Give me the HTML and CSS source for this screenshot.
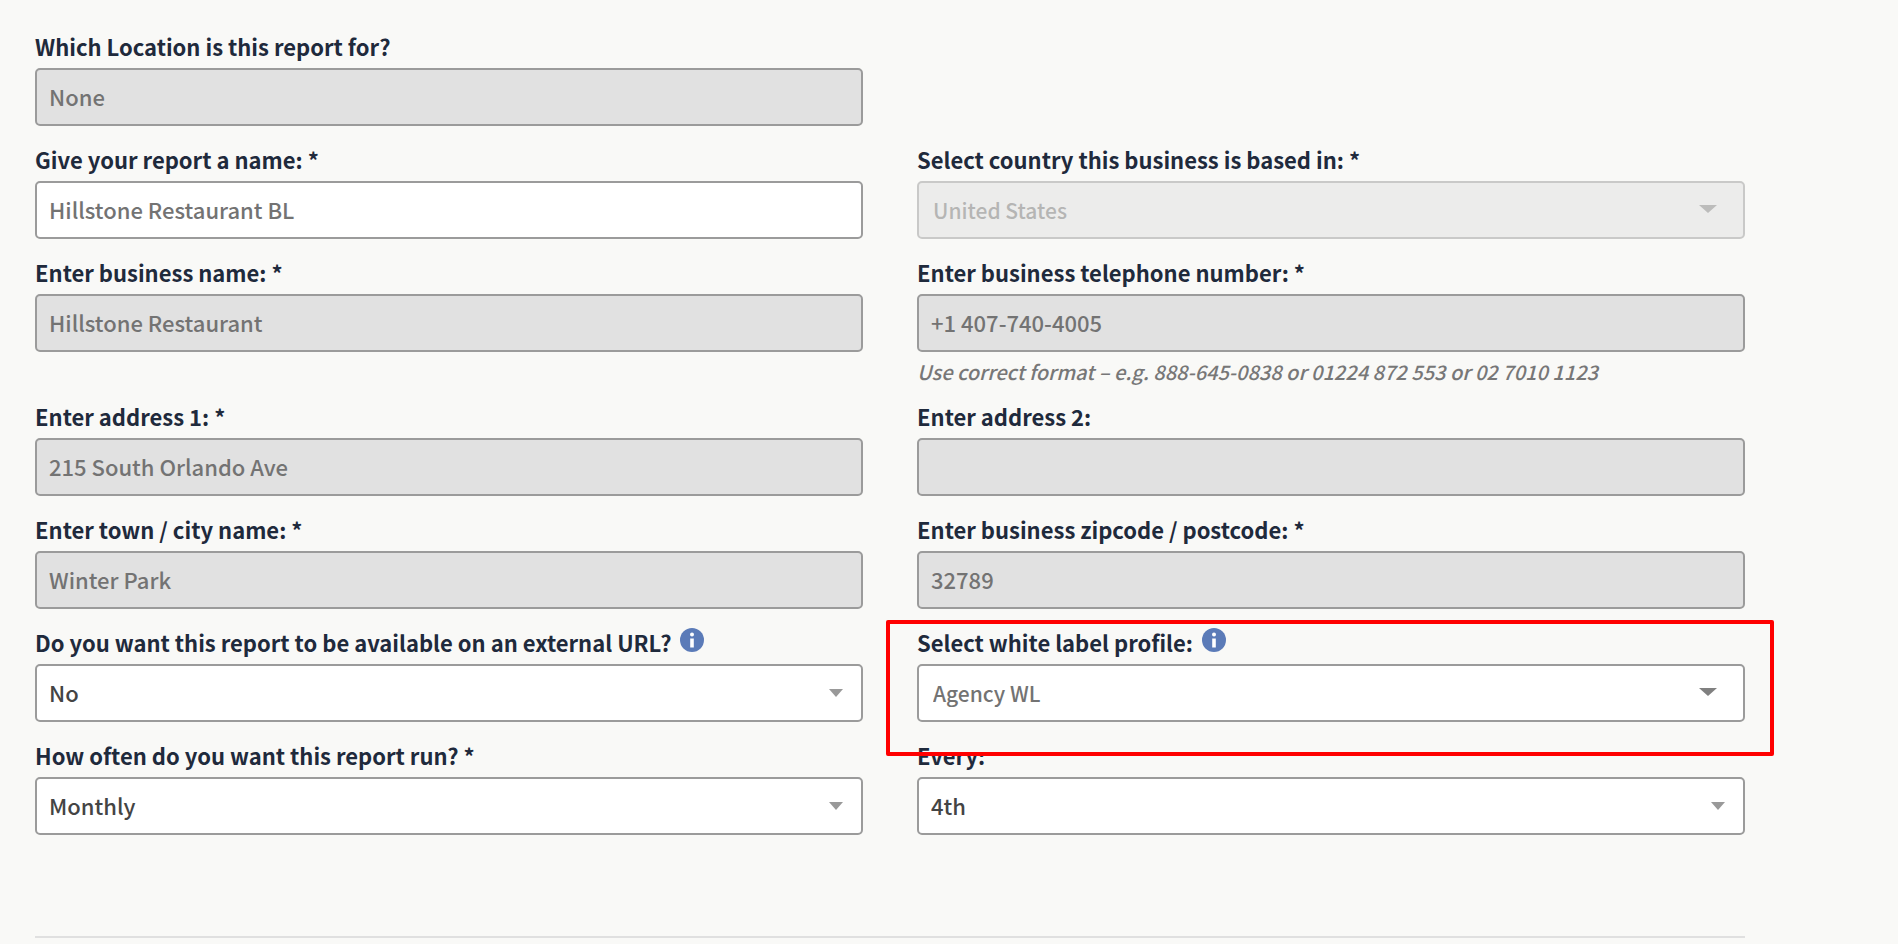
FILE: index.html
```html
<!DOCTYPE html>
<html lang="en">
<head>
    <meta charset="UTF-8">
    <meta name="viewport" content="width=device-width, initial-scale=1.0">
    <title>Report settings</title>
    <link rel="stylesheet" href="styles.css">
</head>
<body>
    <form class="report-form">
        <div class="form-grid">
            <div class="field field-first">
                <label class="field-label" for="location">Which Location is this report for?</label>
                <input class="control" type="text" id="location" value="None" disabled>
            </div>

            <div class="field">
                <label class="field-label" for="reportName">Give your report a name: *</label>
                <input class="control" type="text" id="reportName" value="Hillstone Restaurant BL">
            </div>
            <div class="field">
                <label class="field-label" for="country">Select country this business is based in: *</label>
                <div class="picker picker-disabled">
                    <select class="control" id="country" disabled>
                        <option>United States</option>
                    </select>
                </div>
            </div>

            <div class="field">
                <label class="field-label" for="businessName">Enter business name: *</label>
                <input class="control" type="text" id="businessName" value="Hillstone Restaurant" disabled>
            </div>
            <div class="field">
                <label class="field-label" for="telephone">Enter business telephone number: *</label>
                <input class="control" type="tel" id="telephone" value="+1 407-740-4005" aria-describedby="telephoneHint" disabled>
                <p class="hint" id="telephoneHint">Use correct format – e.g. 888-645-0838 or 01224 872 553 or 02 7010 1123</p>
            </div>

            <div class="field">
                <label class="field-label" for="address1">Enter address 1: *</label>
                <input class="control" type="text" id="address1" value="215 South Orlando Ave" disabled>
            </div>
            <div class="field">
                <label class="field-label" for="address2">Enter address 2:</label>
                <input class="control" type="text" id="address2" value="" disabled>
            </div>

            <div class="field">
                <label class="field-label" for="city">Enter town / city name: *</label>
                <input class="control" type="text" id="city" value="Winter Park" disabled>
            </div>
            <div class="field">
                <label class="field-label" for="postcode">Enter business zipcode / postcode: *</label>
                <input class="control" type="text" id="postcode" value="32789" disabled>
            </div>

            <div class="field">
                <div class="label-row">
                    <label class="field-label" for="externalUrl">Do you want this report to be available on an external URL?</label>
                    <svg class="info-icon" viewBox="0 0 24 24" aria-hidden="true">
                        <circle cx="12" cy="12" r="12" fill="#5b7bb8"/>
                        <circle cx="12" cy="6.5" r="2" fill="#fff"/>
                        <path d="M10.2 10.5h3.6v9h-3.6z" fill="#fff"/>
                    </svg>
                </div>
                <div class="dropdown">
                    <select class="control" id="externalUrl">
                        <option>No</option>
                        <option>Yes</option>
                    </select>
                </div>
            </div>
            <div class="field highlighted">
                <div class="label-row">
                    <label class="field-label" for="whiteLabel">Select white label profile:</label>
                    <svg class="info-icon" viewBox="0 0 24 24" aria-hidden="true">
                        <circle cx="12" cy="12" r="12" fill="#5b7bb8"/>
                        <circle cx="12" cy="6.5" r="2" fill="#fff"/>
                        <path d="M10.2 10.5h3.6v9h-3.6z" fill="#fff"/>
                    </svg>
                </div>
                <div class="picker">
                    <select class="control" id="whiteLabel">
                        <option>Agency WL</option>
                    </select>
                </div>
            </div>

            <div class="field">
                <label class="field-label" for="frequency">How often do you want this report run? *</label>
                <div class="dropdown">
                    <select class="control" id="frequency">
                        <option>Monthly</option>
                    </select>
                </div>
            </div>
            <div class="field">
                <label class="field-label" for="runDay">Every:</label>
                <div class="dropdown">
                    <select class="control" id="runDay">
                        <option>4th</option>
                    </select>
                </div>
            </div>
        </div>
        <hr class="divider">
    </form>
</body>
</html>
```

FILE: styles.css
```css
* { margin: 0; padding: 0; box-sizing: border-box; }
body {
    font-family: "Noto Sans CJK SC", "Open Sans", sans-serif;
    background: #f9f9f7;
    color: #1f2a3c;
    font-size: 22px;
}
.report-form {
    padding: 28px 153px 0 35px;
}
.form-grid {
    display: grid;
    grid-template-columns: 1fr 1fr;
    column-gap: 54px;
    row-gap: 15px;
}
.field {
    display: flex;
    flex-direction: column;
    align-items: stretch;
}
/* the location sits alone on its row */
.field-first {
    grid-row: 1;
    grid-column: 1;
}
.field-first + .field {
    grid-column: 1;
}
.field-label {
    display: block;
    height: 40px;
    line-height: 36px;
    font-weight: bold;
}
.label-row {
    display: flex;
    gap: 9px;
}
.info-icon {
    width: 24px;
    height: 24px;
    margin-top: 4px;
}
.control {
    display: block;
    width: 100%;
    height: 58px;
    padding: 0 12px 3px;
    font-family: inherit;
    font-size: 22px;
    font-weight: 500;
    color: #737373;
    background: #fff;
    border: 2px solid #9b9b9b;
    border-radius: 5px;
    appearance: none;
}
.control:disabled {
    background: #e1e1e1;
    color: #737373;
    opacity: 1;
}
.hint {
    margin-top: 3px;
    height: 28px;
    line-height: 34px;
    font-size: 20px;
    font-style: italic;
    font-weight: 500;
    color: #777;
}

/* drop-downs, the arrow is drawn over the select */
.dropdown, .picker {
    position: relative;
}
.dropdown::after, .picker::after {
    content: "";
    position: absolute;
    pointer-events: none;
    top: 25px;
    right: 20px;
    border: 7px solid transparent;
    border-top: 8px solid #999;
    border-bottom: 0;
}
.dropdown .control {
    color: #444;
}
.picker .control {
    font-size: 21px;
    padding: 0 14px;
}
.picker::after {
    top: 24px;
    right: 28px;
    border-width: 8px 9px 0;
    border-top-color: #808080;
}
.picker-disabled {
    opacity: 0.5;
}

.highlighted {
    position: relative;
}
.highlighted::before {
    content: "";
    position: absolute;
    z-index: 1;
    pointer-events: none;
    top: -4px;
    bottom: -34px;
    left: -31px;
    right: -29px;
    border: 4px solid #f00;
    border-radius: 2px;
}
.divider {
    margin-top: 101px;
    border: 0;
    border-top: 2px solid #e0e0e0;
}
```
